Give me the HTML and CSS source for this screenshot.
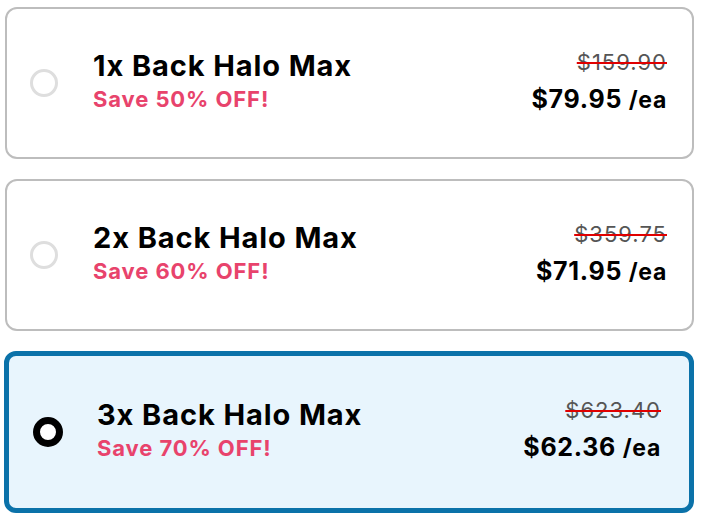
FILE: index.html
```html
<!DOCTYPE html>
<html lang="en">
<head>
<meta charset="utf-8">
<title>Back Halo Max bundles</title>
<link rel="stylesheet" href="styles.css">
</head>
<body>
<div class="list">
  <label class="card">
    <span class="radio"></span>
    <div class="info">
      <div class="title">1x Back Halo Max</div>
      <div class="save">Save 50% OFF!</div>
    </div>
    <div class="prices">
      <div class="old">$159.90</div>
      <div class="now">$79.95 <span class="ea">/ea</span></div>
    </div>
  </label>
  <label class="card">
    <span class="radio"></span>
    <div class="info">
      <div class="title">2x Back Halo Max</div>
      <div class="save">Save 60% OFF!</div>
    </div>
    <div class="prices">
      <div class="old">$359.75</div>
      <div class="now">$71.95 <span class="ea">/ea</span></div>
    </div>
  </label>
  <label class="card selected">
    <span class="radio"></span>
    <div class="info">
      <div class="title">3x Back Halo Max</div>
      <div class="save">Save 70% OFF!</div>
    </div>
    <div class="prices">
      <div class="old">$623.40</div>
      <div class="now">$62.36 <span class="ea">/ea</span></div>
    </div>
  </label>
</div>
</body>
</html>
```
FILE: styles.css
```css
* { box-sizing: border-box; }
html, body { margin: 0; background: #fff; }
body { font-family: Inter, "Liberation Sans", sans-serif; color: #000; }
.list {
  display: flex;
  flex-direction: column;
  gap: 20px;
  padding: 7px 7px 0 5px;
}
.card {
  display: flex;
  align-items: center;
  height: 152px;
  border: 2px solid #bdbdbd;
  border-radius: 12px;
  background: #fff;
  padding: 0 25px 0 23px;
}
.radio {
  flex: none;
  width: 28px;
  height: 28px;
  border-radius: 50%;
  border: 3px solid #dedede;
  background: #fff;
}
.info { flex: 1; margin-left: 35px; margin-bottom: 5px; }
.title {
  font-size: 29px;
  font-weight: 700;
  line-height: 34px;
  letter-spacing: 0.9px;
  margin-bottom: 2px;
}
.save {
  font-size: 22px;
  font-weight: 700;
  line-height: 28px;
  letter-spacing: 0.9px;
  color: #e8436c;
}
.prices { text-align: right; margin-bottom: 1px; }
.old {
  font-size: 22px;
  line-height: 30px;
  letter-spacing: 1px;
  color: #555;
  text-decoration: line-through;
  text-decoration-color: #e00000;
  text-decoration-thickness: 2px;
}
.now {
  font-size: 25px;
  font-weight: 700;
  line-height: 38px;
  letter-spacing: 0.7px;
  margin-top: 3px;
}
.ea { font-size: 23px; }
.card.selected {
  height: 162px;
  border: 5px solid #0b72a9;
  background: #e8f5fd;
  padding: 0 28px 0 24px;
  margin-left: -1px;
}
.card.selected .info { margin-left: 34px; }
.card.selected .prices { margin-bottom: 3px; }
.card.selected .radio {
  border: 7px solid #000;
  width: 30px;
  height: 30px;
}
```
